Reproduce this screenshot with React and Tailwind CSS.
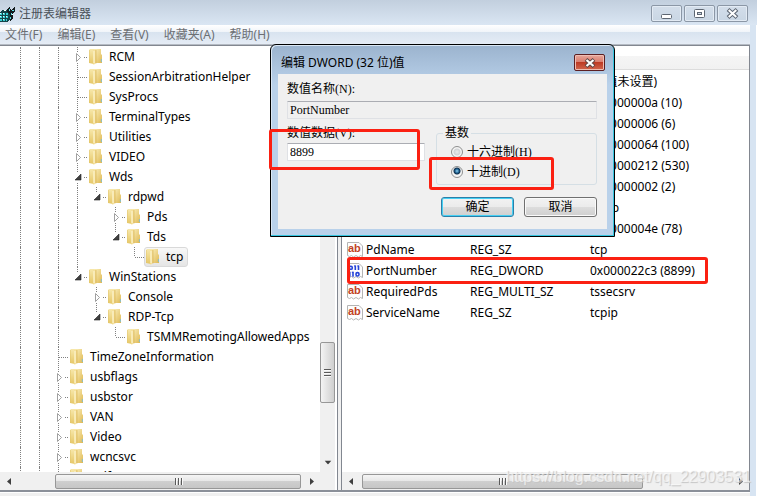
import { useState } from 'react';

// Guides: columns (left to right) in which an ancestor's dotted line runs on.
const TREE = [
  { name: 'RCM', guides: [1, 1, 1], state: 'closed' },
  { name: 'SessionArbitrationHelper', guides: [1, 1, 1] },
  { name: 'SysProcs', guides: [1, 1, 1] },
  { name: 'TerminalTypes', guides: [1, 1, 1], state: 'closed' },
  { name: 'Utilities', guides: [1, 1, 1], state: 'closed' },
  { name: 'VIDEO', guides: [1, 1, 1], state: 'closed' },
  { name: 'Wds', guides: [1, 1, 1], state: 'open' },
  { name: 'rdpwd', guides: [1, 1, 1, 1], state: 'open', last: true },
  { name: 'Pds', guides: [1, 1, 1, 1, 0], state: 'closed' },
  { name: 'Tds', guides: [1, 1, 1, 1, 0], state: 'open', last: true },
  { name: 'tcp', guides: [1, 1, 1, 1, 0, 0], last: true, selected: true },
  { name: 'WinStations', guides: [1, 1, 1], state: 'open', last: true },
  { name: 'Console', guides: [1, 1, 1, 0], state: 'closed' },
  { name: 'RDP-Tcp', guides: [1, 1, 1, 0], state: 'open', last: true },
  { name: 'TSMMRemotingAllowedApps', guides: [1, 1, 1, 0, 0], last: true },
  { name: 'TimeZoneInformation', guides: [1, 1] },
  { name: 'usbflags', guides: [1, 1], state: 'closed' },
  { name: 'usbstor', guides: [1, 1], state: 'closed' },
  { name: 'VAN', guides: [1, 1], state: 'closed' },
  { name: 'Video', guides: [1, 1], state: 'closed' },
  { name: 'wcncsvc', guides: [1, 1], state: 'closed' },
  { name: 'wdf', guides: [1, 1], state: 'closed' },
];

const VALUES = [
  { name: '(默认)', type: 'REG_SZ', data: '(数值未设置)' },
  { name: 'InteractiveDelay', type: 'REG_DWORD', data: '0x0000000a (10)' },
  { name: 'OutBufCount', type: 'REG_DWORD', data: '0x00000006 (6)' },
  { name: 'OutBufDelay', type: 'REG_DWORD', data: '0x00000064 (100)' },
  { name: 'OutBufLength', type: 'REG_DWORD', data: '0x00000212 (530)' },
  { name: 'PdClass', type: 'REG_DWORD', data: '0x00000002 (2)' },
  { name: 'PdDLL', type: 'REG_SZ', data: 'tdtcp' },
  { name: 'PdFlag', type: 'REG_DWORD', data: '0x0000004e (78)' },
  { name: 'PdName', type: 'REG_SZ', data: 'tcp' },
  { name: 'PortNumber', type: 'REG_DWORD', data: '0x000022c3 (8899)' },
  { name: 'RequiredPds', type: 'REG_MULTI_SZ', data: 'tssecsrv' },
  { name: 'ServiceName', type: 'REG_SZ', data: 'tcpip' },
];

const MENUS = ['文件(F)', '编辑(E)', '查看(V)', '收藏夹(A)', '帮助(H)'];

export default function App() {
  return (
    <div className="relative flex h-screen flex-col overflow-hidden bg-[#d7e4f2] font-['Noto_Sans','Noto_Sans_CJK_SC',sans-serif] text-xs text-black">
      <TitleBar />
      <div className="flex min-h-0 flex-1">
        <main className="flex min-w-0 flex-1 flex-col bg-[#f0f0f0]">
          <MenuBar />
          <div className="flex min-h-0 flex-1 gap-[3px] border-b-2 border-[#8b9099]">
            <TreePane />
            <ValuePane />
          </div>
          <div className="h-1 shrink-0 border-t border-white bg-[#f0f0f0]" />
        </main>
        <div className="w-[7px] shrink-0 border-r border-white bg-[#d7e4f2]" />
      </div>
      <EditDialog />
      <Marker className="left-[347px] top-[257px] h-[27px] w-[361px]" />
      <p className="absolute right-1.5 top-[467px] font-['Liberation_Sans',sans-serif] text-base leading-5 text-white/60 [text-shadow:1px_1px_1px_#c4c4c4]">
        https://blog.csdn.net/qq_22903531
      </p>
    </div>
  );
}

function Marker({ className }) {
  return <div className={`pointer-events-none absolute rounded-[3px] border-3 border-[#fb2012] ${className}`} />;
}

function TitleBar() {
  return (
    <header className="flex h-[25px] shrink-0 items-center bg-linear-to-b from-[#c2cfde] to-[#dae6f3] pr-[9px] pt-0.5">
      <RegistryIcon />
      <h1 className="ml-[3px] flex-1 text-[#4a5159]">注册表编辑器</h1>
      <div className="flex gap-0.5">
        <WindowButton label="最小化">
          <rect x="9.5" y="8.5" width="10" height="4" rx="1" fill="#fff" stroke="#5d6672" />
        </WindowButton>
        <WindowButton label="最大化">
          <rect x="9.5" y="3.5" width="10" height="8" rx="1" fill="#fff" stroke="#5d6672" />
          <rect x="12.5" y="6.5" width="4" height="2" fill="#cdd8e5" stroke="#5d6672" />
        </WindowButton>
        <WindowButton label="关闭">
          <path d="M10 3.5l9 8M19 3.5l-9 8" stroke="#5d6672" strokeWidth="4" />
          <path d="M10.7 4l7.6 7M18.3 4l-7.6 7" stroke="#fff" strokeWidth="2" />
        </WindowButton>
      </div>
    </header>
  );
}

function WindowButton({ label, children }) {
  return (
    <button
      aria-label={label}
      className="h-[17px] w-[31px] rounded-[2px] border border-[#8b97a6] bg-linear-to-b from-[#d3deea] to-[#c9d6e4] shadow-[inset_0_0_0_1px_#e3ebf4]"
    >
      <svg viewBox="0 0 29 15" className="h-[15px] w-[29px]" fill="none">
        {children}
      </svg>
    </button>
  );
}

function RegistryIcon() {
  return (
    <svg viewBox="0 0 16 16" className="h-4 w-4" shapeRendering="crispEdges">
      <path d="M0 6l3-2h5l2 2v8l-3 2H0z" fill="#14464a" />
      <path d="M0 7h2v2H0zM3 7h2v2H3zM6 7h2v2H6zM0 10h2v2H0zM3 10h2v2H3zM6 10h2v2H6zM0 13h2v2H0zM3 13h2v2H3zM6 13h1v2H6z" fill="#35cfd4" />
      <path d="M0 7h1v1H0zM3 7h1v1H3zM0 10h1v1H0zM3 10h1v1H3zM6 10h1v1H6zM3 13h1v1H3z" fill="#d6ffff" />
      <path d="M7 3l3-2 1 3 4-3v4l-2 2v5l-3 3V8L7 6z" fill="#131c1f" />
      <path d="M9 3h1v2H9zM12 4h2v1h-2zM11 7h1v2h-1zM10 11h1v2h-1z" fill="#62e4e8" />
      <path d="M4 4h2v1H4zM12 8h1v1h-1z" fill="#fff" />
    </svg>
  );
}

function MenuBar() {
  return (
    <nav className="flex h-5 shrink-0 items-center gap-[15px] border-b border-[#b4bac3] bg-[linear-gradient(#ffffff,#f0f4f9_7px,#d8e3ef_7px,#e5ecf5)] pl-[5px] text-[#6c6f73]">
      {MENUS.map((m) => (
        <button key={m} className="leading-4">
          {m}
        </button>
      ))}
    </nav>
  );
}

function TreePane() {
  return (
    <section className="flex w-[338px] shrink-0 flex-col border-r border-t border-[#828790] bg-white pr-0.5">
      <div className="flex min-h-0 flex-1">
        <ul className="min-w-0 flex-1 overflow-hidden pt-px">
          {TREE.map((node) => (
            <TreeRow key={node.name} node={node} />
          ))}
        </ul>
        <div className="flex w-[15px] shrink-0 flex-col items-center justify-end bg-[#f0f0f0]">
          <div className="flex h-[61px] w-full items-center justify-center rounded-[2px] border border-[#979797] bg-linear-to-r from-[#f4f4f4] to-[#cfcfcf]">
            <Grip className="rotate-90" />
          </div>
          <div className="mt-14 flex h-[13px] items-start">
            <Arrow className="rotate-90" />
          </div>
        </div>
      </div>
      <div className="bg-[#f0f0f0] pr-[15px]">
        <ScrollBar before="w-[38px]" thumb="w-[246px]" />
      </div>
    </section>
  );
}

function TreeRow({ node }) {
  return (
    <li className="flex h-5 items-center whitespace-nowrap pl-[11px]">
      {node.guides.map((on, i) => (
        <span key={i} className="h-full w-[19px] shrink-0 pl-[9px]">
          {on ? <span className="block h-full border-l border-dotted border-[#808080]" /> : null}
        </span>
      ))}
      <Connector state={node.state} last={node.last} />
      <span
        className={
          node.selected
            ? 'flex h-5 items-center rounded-[3px] border border-[#d9d9d9] bg-linear-to-b from-[#f8f8f8] to-[#e5e5e5] pl-px pr-1'
            : 'flex h-5 items-center pl-0.5'
        }
      >
        <Folder />
        <span className="pl-[7px]">{node.name}</span>
      </span>
    </li>
  );
}

function Connector({ state, last }) {
  return (
    <svg viewBox="0 0 19 20" className="h-5 w-[19px] shrink-0" fill="none">
      <g stroke="#808080" strokeDasharray="1 1">
        <path d={state ? 'M9.5 0v5' : 'M9.5 0v10'} />
        {!last && <path d={state ? 'M9.5 16v4' : 'M9.5 10v10'} />}
        <path d={state ? 'M16 10.5h3' : 'M10 10.5h9'} />
      </g>
      {state === 'closed' && <path d="M8.5 6.5v8l4-4z" fill="#fff" stroke="#a0a0a0" />}
      {state === 'open' && <path d="M13 7v6H7z" fill="#404040" stroke="#222" strokeWidth=".6" />}
    </svg>
  );
}

function Folder() {
  return (
    <svg viewBox="0 0 13 16" className="h-4 w-[13px] shrink-0">
      <defs>
        <linearGradient id="folder-back" x1="0" x2="1" y1="0" y2="1">
          <stop offset="0" stopColor="#fbf0bd" />
          <stop offset="1" stopColor="#dfb954" />
        </linearGradient>
        <linearGradient id="folder-front" x1="0" x2="0" y1="0" y2="1">
          <stop offset="0" stopColor="#f7e8ac" />
          <stop offset="1" stopColor="#e6c766" />
        </linearGradient>
      </defs>
      <path d="M5 0h7v5l1 1v8H5z" fill="url(#folder-back)" />
      <path d="M0 1L1 0h4v15L0 14z" fill="url(#folder-front)" />
      <path d="M4 1.500L6.500 0v14.500L4.500 16z" fill="#f5e29c" />
      <path d="M5 2v12" stroke="#fffbe6" strokeWidth=".8" />
      <path d="M6.900 1v13.500" stroke="#d5ad48" strokeWidth=".7" />
      <path d="M.3 1v13" stroke="#e0c46c" strokeWidth=".6" />
      <path d="M12.400 10v3" stroke="#74bede" strokeWidth=".8" />
    </svg>
  );
}

function Grip({ className = '' }) {
  return (
    <svg viewBox="0 0 9 7" className={`h-[7px] w-[9px] shrink-0 ${className}`}>
      <path d="M1.500 0v7M4.500 0v7M7.500 0v7" stroke="#5a5a5a" />
      <path d="M2.500 0v7M5.500 0v7M8.500 0v7" stroke="#fafafa" />
    </svg>
  );
}

function Arrow({ className = '' }) {
  return (
    <svg viewBox="0 0 4 7" className={`h-[7px] w-1 shrink-0 ${className}`}>
      <path d="M0 0l4 3.500L0 7z" fill="#3f3f3f" />
    </svg>
  );
}

function ScrollBar({ before, thumb }) {
  return (
    <div className="flex h-[18px] shrink-0 items-center bg-[#f0f0f0]">
      <button aria-label="向左滚动" className="flex w-[17px] shrink-0 justify-center">
        <Arrow className="rotate-180" />
      </button>
      <div className={`shrink-0 ${before}`} />
      <div
        className={`flex h-[15px] items-center justify-center rounded-[2px] border border-[#979797] bg-[linear-gradient(#f5f5f5,#e6e6e6_50%,#cfcfcf_50%,#c6c6c6)] ${thumb}`}
      >
        <Grip />
      </div>
      <button aria-label="向右滚动" className="ml-auto flex w-[17px] shrink-0 justify-center">
        <Arrow />
      </button>
    </div>
  );
}

function ValuePane() {
  return (
    <section className="flex min-w-0 flex-1 flex-col border-x border-t border-[#828790] bg-white">
      <div className="min-h-0 flex-1 overflow-hidden">
        <table className="w-full table-fixed border-collapse whitespace-nowrap text-left">
          <thead>
            <tr className="h-[25px] bg-[linear-gradient(#ffffff,#ffffff_10px,#f5f5f5_10px,#f1f1f1_23px,#dcdcdc_23px,#dcdcdc_24px,#ffffff_24px)]">
              <th className="w-32 pl-[23px] font-normal">名称</th>
              <th className="w-[120px] font-normal">类型</th>
              <th className="font-normal">数据</th>
            </tr>
          </thead>
          <tbody>
            {VALUES.map((v) => (
              <tr key={v.name} className="h-[21px]">
                <td className="p-0 pl-[5px]">
                  <span className="flex items-center gap-[3px]">
                    {v.type === 'REG_DWORD' ? <BinaryIcon /> : <StringIcon />}
                    {v.name}
                  </span>
                </td>
                <td className="p-0">{v.type}</td>
                <td className="p-0">{v.data}</td>
              </tr>
            ))}
          </tbody>
        </table>
      </div>
      <ScrollBar before="w-[3px]" thumb="w-[281px]" />
    </section>
  );
}

function Page() {
  return (
    <path
      d="M.5.500h11.500l3.500 3.500v10.500l-2-1-2 1.500-2.500-1.500-2.500 1.500-2-1.500-2 1-2-1z"
      fill="#fdfdfd"
      stroke="#b4b4b4"
    />
  );
}

function StringIcon() {
  return (
    <svg viewBox="0 0 16 16" className="h-4 w-4 shrink-0">
      <Page />
      <text x="1" y="10" fill="#c2421f" fontFamily="Liberation Sans" fontWeight="700" fontSize="11">
        ab
      </text>
    </svg>
  );
}

function BinaryIcon() {
  return (
    <svg viewBox="0 0 16 16" className="h-4 w-4 shrink-0" fill="none">
      <Page />
      <g stroke="#2443d8" strokeWidth="1.600">
        <rect x="2.300" y="3.300" width="3" height="3" rx="1.400" />
        <path d="M8.300 2.500v4.500M11.500 2.500v4.500M2.800 8.800v5M6 8.800v5" />
        <rect x="9" y="9.600" width="3" height="3.400" rx="1.400" />
      </g>
      <path d="M7 3h1.500M10.300 3h1.500M1.500 9.300h1.500M4.800 9.300h1.500" stroke="#2443d8" />
    </svg>
  );
}

const FIELD = 'block h-[18px] w-full rounded-[1px] border border-[#dfe1e5] border-t-[#abadb3] px-0.5 text-xs leading-4 outline-none';

function EditDialog() {
  const [value, setValue] = useState('8899');
  const [base, setBase] = useState('dec');

  return (
    <div
      role="dialog"
      aria-labelledby="dialog-title"
      className="absolute left-[270px] top-[44px] w-[345px] rounded-t-[6px] border border-black bg-[linear-gradient(#9bb3ce,#b9d1ea_40px)] px-[7px] pb-[7px] shadow-[inset_-1px_-1px_0_#35c5df,inset_1px_1px_0_#dbe8f5]"
    >
      <div className="flex h-[29px] items-center justify-between pl-[3px] pr-0.5 pt-1.5">
        <h2 id="dialog-title">编辑 DWORD (32 位)值</h2>
        <button
          aria-label="关闭"
          className="flex h-[17px] w-[31px] items-center justify-center rounded-[2px] border border-[#5c1f22] bg-[linear-gradient(#e7a79b,#d9796a_50%,#bd3a24_50%,#d1664e)] shadow-[inset_0_0_0_1px_#eebdb3]"
        >
          <svg viewBox="0 0 12 10" className="h-2.5 w-3">
            <path d="M2 1.500l8 7M10 1.500l-8 7" stroke="#5d4444" strokeWidth="4" />
            <path d="M2.500 2l7 6M9.500 2l-7 6" stroke="#fff" strokeWidth="2.200" />
          </svg>
        </button>
      </div>
      <form
        onSubmit={(e) => e.preventDefault()}
        className="bg-[#f0f0f0] pb-3 pl-[9px] pr-2.5 pt-[7px] font-['Liberation_Serif','Noto_Sans_CJK_SC',serif] leading-4"
      >
        <label htmlFor="value-name" className="block">
          数值名称(N):
        </label>
        <input id="value-name" readOnly value="PortNumber" className={`${FIELD} mt-1 bg-[#f0f0f0]`} />
        <div className="mt-1.5 flex gap-[11px]">
          <div className="flex-1">
            <label htmlFor="value-data" className="block">
              数值数据(V):
            </label>
            <input
              id="value-data"
              value={value}
              onChange={(e) => setValue(e.target.value)}
              className={`${FIELD} mt-0.5 bg-white`}
            />
          </div>
          <fieldset className="w-[161px] rounded-[3px] border border-[#d5dfe5] pb-0.5 pl-3.5 pt-px">
            <legend className="-ml-2 px-0.5">基数</legend>
            <Radio label="十六进制(H)" checked={base === 'hex'} onChange={() => setBase('hex')} />
            <Radio label="十进制(D)" checked={base === 'dec'} onChange={() => setBase('dec')} />
          </fieldset>
        </div>
        <div className="mt-3 flex justify-end gap-2.5">
          <button className="h-5 w-[73px] rounded-[3px] border border-[#2c7fa8] bg-[linear-gradient(#f2f2f2,#ebebeb_50%,#dddddd_50%,#cfcfcf)] shadow-[inset_0_0_0_1px_#45d0f4]">
            确定
          </button>
          <button
            type="button"
            className="h-5 w-[73px] rounded-[3px] border border-[#707070] bg-[linear-gradient(#f2f2f2,#ebebeb_50%,#dddddd_50%,#cfcfcf)] shadow-[inset_0_0_0_1px_#fafafa]"
          >
            取消
          </button>
        </div>
      </form>
      <Marker className="-left-0.5 top-[84px] h-[41px] w-[151px]" />
      <Marker className="left-[158px] top-[112px] h-[33px] w-[125px]" />
    </div>
  );
}

function Radio({ label, checked, onChange }) {
  return (
    <label className="flex h-5 items-center gap-1">
      <input
        type="radio"
        name="base"
        checked={checked}
        onChange={onChange}
        className="h-3 w-3 appearance-none rounded-full border border-[#8e8f8f] bg-[radial-gradient(circle,#e9e9e9_0,#cfd2d5_3px,#f4f4f4_4px)] checked:bg-[radial-gradient(circle_at_5px_4px,#8fd4f5_0,#1d5d8c_2px,#10304d_3px,#f4f4f4_4px)]"
      />
      {label}
    </label>
  );
}
